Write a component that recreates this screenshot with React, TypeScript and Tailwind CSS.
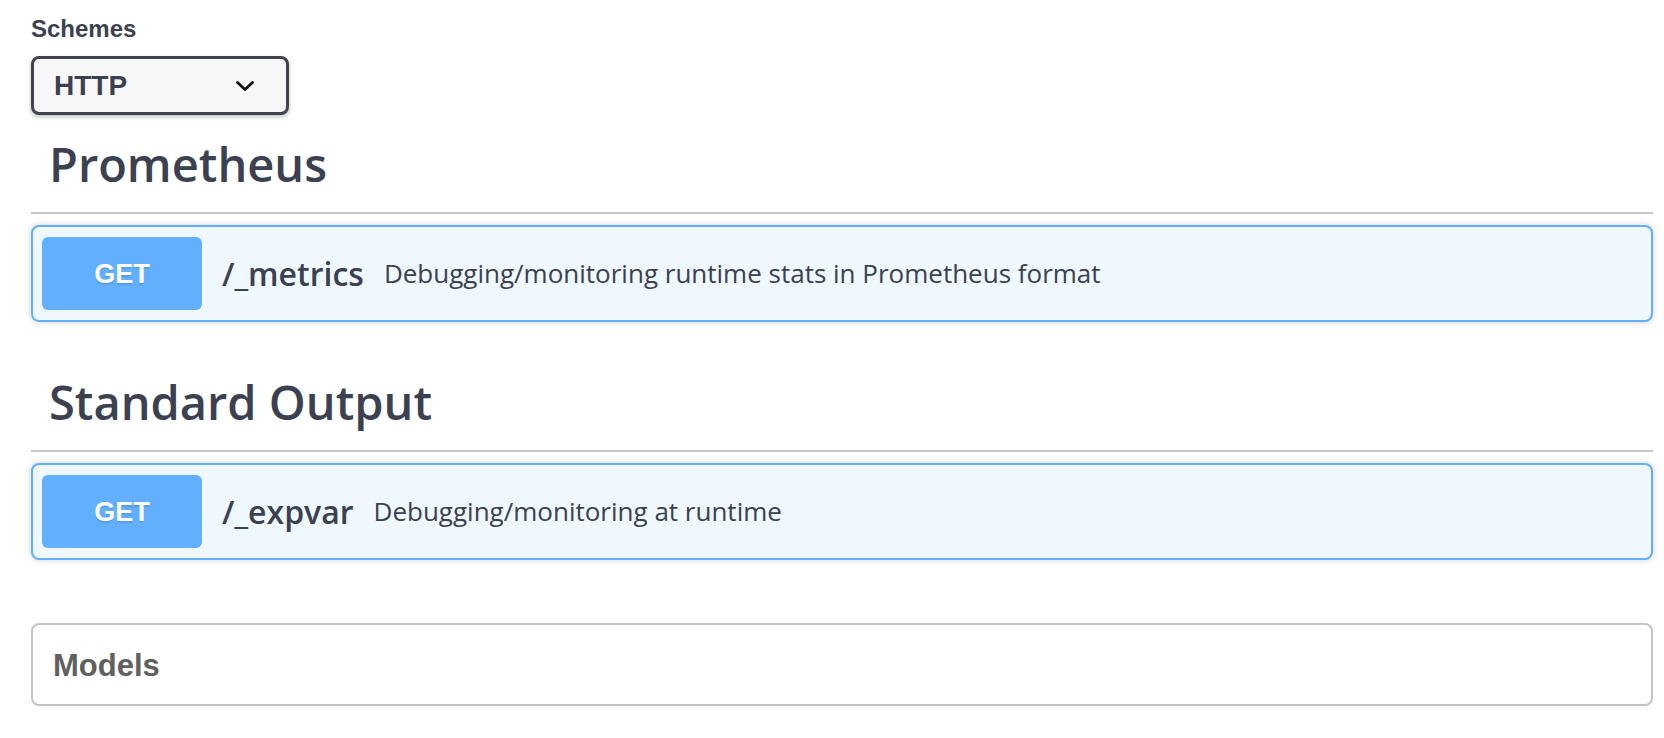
const operations = [
  {
    tag: 'Prometheus',
    path: '/_metrics',
    summary: 'Debugging/monitoring runtime stats in Prometheus format',
  },
  {
    tag: 'Standard Output',
    path: '/_expvar',
    summary: 'Debugging/monitoring at runtime',
  },
];

const OpBlock = ({ path, summary }: { path: string; summary: string }) => (
  <div className="mt-[11px] rounded-[8px] border-2 border-[#61affe] bg-[#eff7ff] px-[9px] py-[10px] shadow-[0_0_6px_rgba(0,0,0,0.19)]">
    <div className="flex items-center">
      <span className="flex h-[73px] w-[160px] items-center justify-center rounded-[6px] bg-[#61affe] pt-[2px] font-['Liberation_Sans',sans-serif] text-[27px] font-bold text-white [text-shadow:0_2px_0_rgba(0,0,0,0.1)]">
        GET
      </span>
      <span className="pl-[20px] pr-[20px] font-['Open_Sans',sans-serif] text-[32px] font-semibold text-[#3b4151]">
        {path}
      </span>
      <span className="font-['Open_Sans',sans-serif] text-[26px] text-[#3b4151]">{summary}</span>
    </div>
  </div>
);

export default function App() {
  return (
    <div className="min-h-screen bg-white pl-[31px] pr-[11px] pt-[17px] text-[#3b4151]">
      <div className="font-['Liberation_Sans',sans-serif] text-[24px] font-bold leading-[24px]">Schemes</div>
      <div className="mt-[15px] flex h-[59px] w-[258px] items-center justify-between rounded-[8px] border-[3px] border-[#41444e] bg-[#f7f7f7] pl-[20px] pr-[32px] shadow-[0_2px_4px_0_rgba(0,0,0,0.25)]">
        <span className="font-['Liberation_Sans',sans-serif] text-[28px] font-bold text-[#3b4151]">HTTP</span>
        <svg width="18" height="10" viewBox="0 0 18 10" fill="none">
          <polyline points="1.5,1.5 9,8.5 16.5,1.5" stroke="#111" strokeWidth="2.8" strokeLinecap="round" strokeLinejoin="round" />
        </svg>
      </div>

      {operations.map((op, i) => (
        <section key={op.tag} className={i === 0 ? 'mt-[4px]' : 'mt-[35px]'}>
          <h3 className="border-b-2 border-[#c4c6cb] pb-[23px] pl-[18px] pt-[20px] font-['Open_Sans',sans-serif] text-[47px] font-semibold leading-[50px] text-[#3b4151]">
            {op.tag}
          </h3>
          <OpBlock path={op.path} summary={op.summary} />
        </section>
      ))}

      <div className="mt-[63px] flex h-[83px] items-center rounded-[8px] border-2 border-[#c4c4c8] pl-[20px] pt-[4px]">
        <span className="font-['Liberation_Sans',sans-serif] text-[31px] font-bold text-[#606060]">Models</span>
      </div>
    </div>
  );
}
